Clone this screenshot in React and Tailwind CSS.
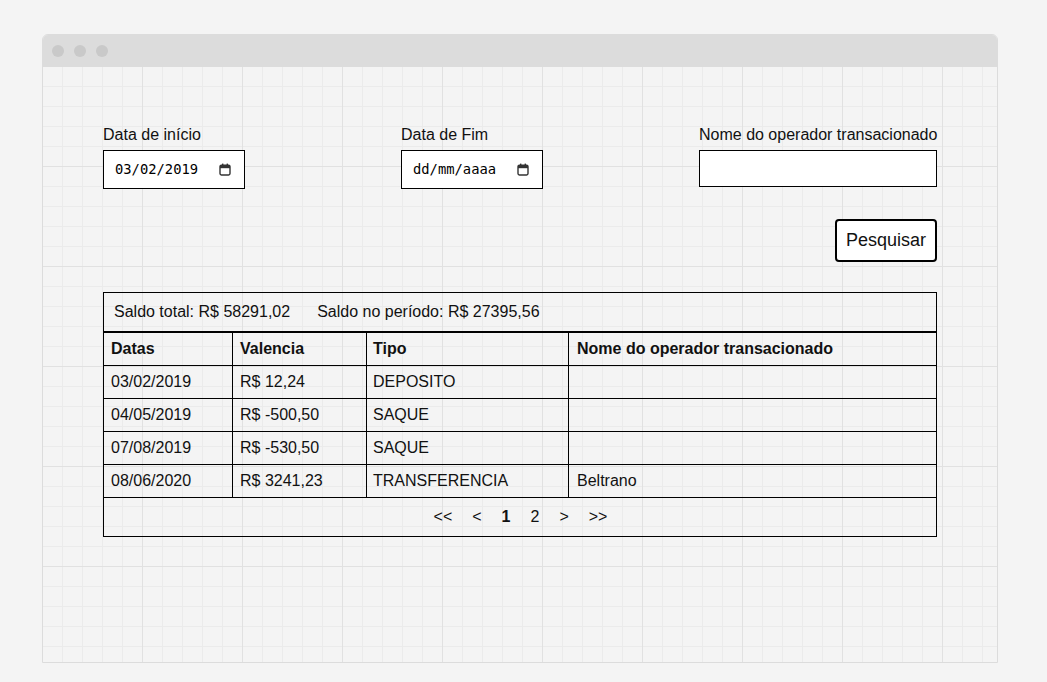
const rows = [
  { date: '03/02/2019', value: 'R$ 12,24', type: 'DEPOSITO', name: '' },
  { date: '04/05/2019', value: 'R$ -500,50', type: 'SAQUE', name: '' },
  { date: '07/08/2019', value: 'R$ -530,50', type: 'SAQUE', name: '' },
  { date: '08/06/2020', value: 'R$ 3241,23', type: 'TRANSFERENCIA', name: 'Beltrano' },
]

function CalendarIcon() {
  return (
    <svg width="12" height="13" viewBox="0 0 12 13" className="text-[#333]">
      <rect x="1" y="2.2" width="10" height="9.8" rx="1.4" fill="none" stroke="currentColor" strokeWidth="1.4" />
      <rect x="1" y="2.2" width="10" height="3" fill="currentColor" />
      <rect x="3" y="0.6" width="1.4" height="2.4" fill="currentColor" />
      <rect x="7.6" y="0.6" width="1.4" height="2.4" fill="currentColor" />
    </svg>
  )
}

function DateField({ label, value }) {
  return (
    <div className="w-[298px] shrink-0 flex flex-col items-start">
      <label className="leading-[18px] text-[16px]">{label}</label>
      <div className="mt-[6px] w-[142px] h-[39px] bg-white border border-black flex items-center pl-[11px] pr-[13px] justify-between">
        <span className="font-['DejaVu_Sans_Mono',monospace] text-[13.8px] text-black">{value}</span>
        <CalendarIcon />
      </div>
    </div>
  )
}

function Cell({ w, pad = 'px-[7px]', bold, last, children }) {
  return (
    <div className={`${w} ${last ? '' : 'border-r border-black'} ${pad} flex items-center ${bold ? 'font-bold' : ''}`}>
      {children}
    </div>
  )
}

export default function App() {
  return (
    <div className="min-h-screen bg-[#f4f4f4] pt-[34px] pl-[42px] font-['Liberation_Sans',Arial,sans-serif] text-[#111]">
      <div className="w-[956px] h-[629px] border border-[#dcdcdc] rounded-t-[6px] overflow-hidden flex flex-col">
        <div className="h-[32px] bg-[#dcdcdc] flex items-center gap-[10px] pl-[9px] shrink-0">
          <span className="w-3 h-3 rounded-full bg-[#c9c9c9]" />
          <span className="w-3 h-3 rounded-full bg-[#c9c9c9]" />
          <span className="w-3 h-3 rounded-full bg-[#c9c9c9]" />
        </div>
        <div className="flex-1 px-[60px] pt-[59px] bg-[image:linear-gradient(to_right,#e1e1e1_1px,transparent_1px),linear-gradient(to_bottom,#e1e1e1_1px,transparent_1px),linear-gradient(to_right,#ebebeb_1px,transparent_1px),linear-gradient(to_bottom,#ebebeb_1px,transparent_1px)] bg-[size:100px_100px,100px_100px,20px_20px,20px_20px] bg-[position:-1px_-1px]">
          <div className="flex items-start">
            <DateField label="Data de início" value="03/02/2019" />
            <DateField label="Data de Fim" value="dd/mm/aaaa" />
            <div className="flex-1 flex flex-col items-start">
              <label className="leading-[18px] text-[16px] whitespace-nowrap">Nome do operador transacionado</label>
              <input type="text" className="mt-[6px] w-[238px] h-[37px] bg-white border border-black outline-none px-2" />
            </div>
          </div>

          <div className="flex justify-end mt-[30px]">
            <button className="w-[102px] h-[43px] bg-white border-2 border-black rounded-[4px] text-[18px] text-[#111]">
              Pesquisar
            </button>
          </div>

          <div className="mt-[30px] w-[834px] border border-black text-[16px]">
            <div className="h-[40px] border-b-2 border-black flex items-center pl-[10px]">
              <span>Saldo total: R$ 58291,02</span>
              <span className="ml-[27px]">Saldo no período: R$ 27395,56</span>
            </div>
            <div className="h-[33px] border-b border-black flex">
              <Cell w="w-[129px]" bold>Datas</Cell>
              <Cell w="w-[134px]" bold>Valencia</Cell>
              <Cell w="w-[202px]" pad="px-[6px]" bold>Tipo</Cell>
              <Cell w="flex-1" pad="px-[8px]" bold last>Nome do operador transacionado</Cell>
            </div>
            {rows.map(r => (
              <div key={r.date} className="h-[33px] border-b border-black flex">
                <Cell w="w-[129px]">{r.date}</Cell>
                <Cell w="w-[134px]">{r.value}</Cell>
                <Cell w="w-[202px]" pad="px-[6px]">{r.type}</Cell>
                <Cell w="flex-1" pad="px-[8px]" last>{r.name}</Cell>
              </div>
            ))}
            <div className="h-[38px] flex items-center justify-center gap-5 pl-px">
              <span>&lt;&lt;</span>
              <span>&lt;</span>
              <span className="font-bold">1</span>
              <span>2</span>
              <span>&gt;</span>
              <span>&gt;&gt;</span>
            </div>
          </div>
        </div>
      </div>
    </div>
  )
}
